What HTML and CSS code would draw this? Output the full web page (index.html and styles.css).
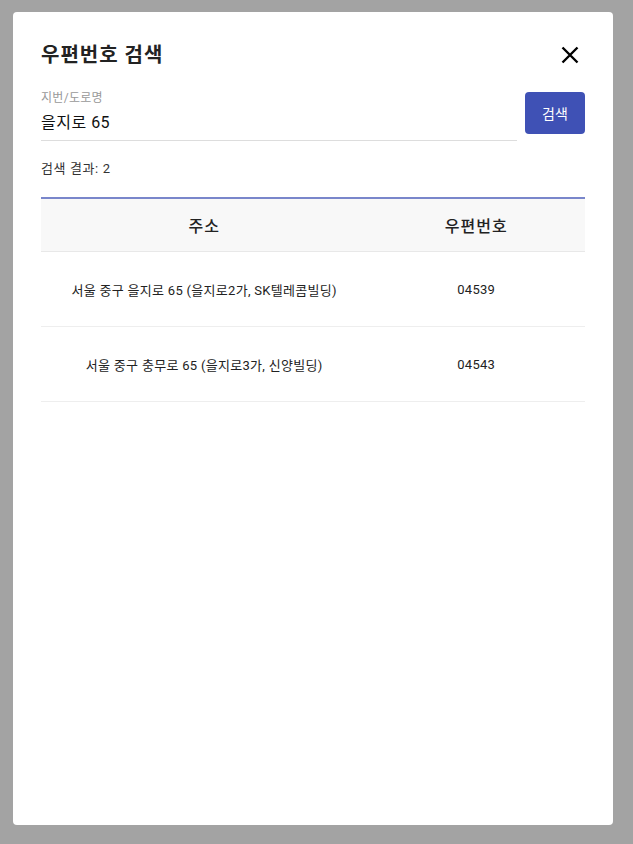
FILE: index.html
```html
<!DOCTYPE html>
<html lang="ko">
<head>
<meta charset="utf-8">
<title>우편번호 검색</title>
<link rel="stylesheet" href="styles.css">
</head>
<body>
<div class="modal">
  <div class="modal-head">
    <h2 class="title">우편번호 검색</h2>
    <button class="close" aria-label="닫기">
      <svg width="18" height="18" viewBox="0 0 18 18"><path d="M1.5 1.5L16.5 16.5M16.5 1.5L1.5 16.5" stroke="#000" stroke-width="2.4" fill="none"/></svg>
    </button>
  </div>
  <div class="search-row">
    <div class="field">
      <label class="label">지번/도로명</label>
      <div class="input">을지로 65</div>
    </div>
    <button class="search-btn">검색</button>
  </div>
  <div class="count">검색 결과: 2</div>
  <table class="results">
    <thead>
      <tr><th class="col-addr">주소</th><th class="col-zip">우편번호</th></tr>
    </thead>
    <tbody>
      <tr><td>서울 중구 을지로 65 (을지로2가, SK텔레콤빌딩)</td><td>04539</td></tr>
      <tr><td>서울 중구 충무로 65 (을지로3가, 신양빌딩)</td><td>04543</td></tr>
    </tbody>
  </table>
</div>
</body>
</html>
```

FILE: styles.css
```css
html, body {
  margin: 0;
  padding: 0;
  height: 100%;
}
body {
  background: #a3a3a3;
  font-family: Roboto, "Noto Sans CJK KR", sans-serif;
  color: #222;
  box-sizing: border-box;
  padding: 12px 20px 19px 13px;
}
.modal {
  background: #fff;
  border-radius: 4px;
  height: 100%;
  box-sizing: border-box;
  padding: 29px 28px 28px;
}
.modal-head {
  display: flex;
  align-items: center;
  justify-content: space-between;
  height: 28px;
}
.title {
  margin: 0;
  font-size: 20px;
  font-weight: 700;
  color: #222;
  line-height: 28px;
  letter-spacing: 1px;
}
.close {
  border: 0;
  background: none;
  padding: 0;
  margin-right: 6px;
  margin-top: -1px;
  width: 18px;
  height: 18px;
  display: flex;
}
.search-row {
  display: flex;
  align-items: flex-start;
  gap: 8px;
  margin-top: 23px;
}
.field {
  flex: 1;
  border-bottom: 1px solid #ddd;
  padding-bottom: 6px;
}
.label {
  display: block;
  font-size: 12px;
  color: #999;
  line-height: 16px;
  margin-top: -2px;
  letter-spacing: 0.3px;
}
.input {
  font-size: 16px;
  color: #111;
  line-height: 22px;
  margin-top: 6px;
  letter-spacing: 0.5px;
}
.search-btn {
  width: 60px;
  height: 42px;
  border: 0;
  border-radius: 4px;
  background: #3f51b5;
  color: #fff;
  font-family: inherit;
  font-size: 14px;
}
.count {
  font-size: 13px;
  color: #333;
  margin-top: 19px;
  line-height: 18px;
  letter-spacing: 0.6px;
}
.results {
  width: 100%;
  border-collapse: collapse;
  margin-top: 19px;
  border-top: 2px solid #7986cb;
}
.results th {
  background: #f8f8f8;
  font-weight: 500;
  font-size: 16px;
  color: #222;
  height: 52px;
  border-bottom: 1px solid #e8e8e8;
  padding: 0;
  letter-spacing: 1px;
}
.col-addr { width: 60%; }
.col-zip { width: 40%; }
.results td {
  text-align: center;
  font-size: 13px;
  color: #222;
  height: 74px;
  border-bottom: 1px solid #eee;
  padding: 0;
  letter-spacing: 0.3px;
}
```
